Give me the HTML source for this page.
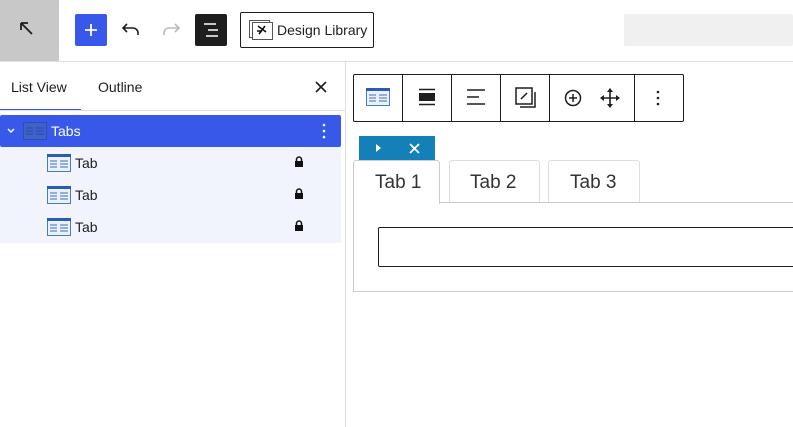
<!DOCTYPE html>
<html><head><style>
*{box-sizing:border-box;margin:0;padding:0}
body{width:793px;height:427px;overflow:hidden;background:#fff;font-family:"Liberation Sans",sans-serif;position:relative;color:#1e1e1e}
.a{position:absolute}
.tbi{position:absolute;top:0;height:47px;display:flex;align-items:center;justify-content:center}
</style></head><body>
<div class="a" style="left:0;top:0;width:59px;height:61px;background:#c8c8c8"></div>
<svg class="a" style="left:18px;top:20px" width="18" height="18" viewBox="0 0 18 18"><path d="M3 3L14 14M3 3h7M3 3v7" stroke="#1e1e1e" stroke-width="1.8" fill="none"/></svg>
<div class="a" style="left:75px;top:14px;width:32px;height:32px;background:#3858e9;border-radius:2px"></div>
<svg class="a" style="left:83px;top:22px" width="16" height="16"><path d="M8 2v12M2 8h12" stroke="#fff" stroke-width="1.8"/></svg>
<svg class="a" style="left:120px;top:20px" width="22" height="20" viewBox="0 0 22 20"><path d="M7 4L3 8l4 4M3 8h10a5 5 0 0 1 5 5v2" stroke="#1e1e1e" stroke-width="1.6" fill="none"/></svg>
<svg class="a" style="left:160px;top:20px" width="22" height="20" viewBox="0 0 22 20"><path d="M15 4l4 4-4 4M19 8H9a5 5 0 0 0-5 5v2" stroke="#bbb" stroke-width="1.6" fill="none"/></svg>
<div class="a" style="left:195px;top:14px;width:32px;height:32px;background:#1e1e1e;border-radius:2px"></div>
<svg class="a" style="left:201px;top:22px" width="20" height="16"><path d="M3 2h12M7 8h10M5 14h12" stroke="#fff" stroke-width="1.6"/></svg>
<div class="a" style="left:240px;top:12px;width:134px;height:36px;border:1px solid #1e1e1e;border-radius:2px"></div>
<svg class="a" style="left:248px;top:19px" width="26" height="22"><rect x="1.5" y="1.5" width="20" height="17" fill="#fff" stroke="#555"/><rect x="4.5" y="3.5" width="20" height="17" fill="#fff" stroke="#555"/><path d="M10 7l8 6M17 7l-6 8M9 12h5" stroke="#111" stroke-width="1.6"/></svg>
<div class="a" style="left:277px;top:22px;font-size:14px">Design Library</div>
<div class="a" style="left:624px;top:14px;width:169px;height:32px;background:#f0f0f0;border-radius:2px"></div>
<div class="a" style="left:0;top:61px;width:793px;height:1px;background:#e0e0e0"></div>
<div class="a" style="left:345px;top:62px;width:1px;height:365px;background:#e0e0e0"></div>
<div class="a" style="left:11px;top:79px;font-size:14px">List View</div>
<div class="a" style="left:98px;top:79px;font-size:14px">Outline</div>
<svg class="a" style="left:314px;top:80px" width="14" height="14"><path d="M2 2l10 10M12 2L2 12" stroke="#1e1e1e" stroke-width="1.6"/></svg>
<div class="a" style="left:0;top:109px;width:81px;height:2px;background:#3858e9"></div>
<div class="a" style="left:0;top:110px;width:345px;height:1px;background:#e0e0e0"></div>
<div class="a" style="left:0;top:115px;width:341px;height:32px;background:#3858e9;border-radius:2px"></div>
<svg class="a" style="left:6px;top:127px" width="10" height="8"><path d="M2 2l3 3 3-3" stroke="#fff" stroke-width="1.5" fill="none"/></svg>
<svg class="a" style="left:23px;top:122px" width="24" height="18"><rect x="0.5" y="0.5" width="23" height="17" fill="#3f62c8" stroke="#2e4fb0"/><path d="M3 6h7M3 9h7M3 12h7M13 6h8M13 9h8M13 12h8" stroke="#2a4aa8"/></svg>
<div class="a" style="left:51px;top:123px;font-size:14px;color:#fff">Tabs</div>
<svg class="a" style="left:321px;top:123px" width="6" height="16"><circle cx="3" cy="2" r="1.3" fill="#fff"/><circle cx="3" cy="8" r="1.3" fill="#fff"/><circle cx="3" cy="14" r="1.3" fill="#fff"/></svg>
<div class="a" style="left:0;top:147px;width:341px;height:96px;background:#f1f4fd"></div>
<div id="rows"></div>
<script></script>
<!-- rows -->
<svg class="a" style="left:47px;top:154px" width="24" height="18"><rect x="0.5" y="0.5" width="23" height="17" fill="#eaf1fb" stroke="#4a7cc4"/><rect x="0" y="0" width="24" height="3" fill="#2b5cb0"/><path d="M3 7h7M3 10h7M3 13h7M13 7h8M13 10h8M13 13h8" stroke="#3c6dbb"/></svg>
<div class="a" style="left:75px;top:155px;font-size:14px">Tab</div>
<svg class="a" style="left:294px;top:156px" width="10" height="12"><path d="M2.5 5V3.5a2.5 2.5 0 0 1 5 0V5" stroke="#111" stroke-width="1.5" fill="none"/><rect x="1" y="5" width="8" height="6" fill="#111"/></svg>
<svg class="a" style="left:47px;top:186px" width="24" height="18"><rect x="0.5" y="0.5" width="23" height="17" fill="#eaf1fb" stroke="#4a7cc4"/><rect x="0" y="0" width="24" height="3" fill="#2b5cb0"/><path d="M3 7h7M3 10h7M3 13h7M13 7h8M13 10h8M13 13h8" stroke="#3c6dbb"/></svg>
<div class="a" style="left:75px;top:187px;font-size:14px">Tab</div>
<svg class="a" style="left:294px;top:188px" width="10" height="12"><path d="M2.5 5V3.5a2.5 2.5 0 0 1 5 0V5" stroke="#111" stroke-width="1.5" fill="none"/><rect x="1" y="5" width="8" height="6" fill="#111"/></svg>
<svg class="a" style="left:47px;top:218px" width="24" height="18"><rect x="0.5" y="0.5" width="23" height="17" fill="#eaf1fb" stroke="#4a7cc4"/><rect x="0" y="0" width="24" height="3" fill="#2b5cb0"/><path d="M3 7h7M3 10h7M3 13h7M13 7h8M13 10h8M13 13h8" stroke="#3c6dbb"/></svg>
<div class="a" style="left:75px;top:219px;font-size:14px">Tab</div>
<svg class="a" style="left:294px;top:220px" width="10" height="12"><path d="M2.5 5V3.5a2.5 2.5 0 0 1 5 0V5" stroke="#111" stroke-width="1.5" fill="none"/><rect x="1" y="5" width="8" height="6" fill="#111"/></svg>

<!-- block toolbar -->
<div class="a" style="left:353px;top:74px;width:331px;height:48px;border:1px solid #1e1e1e;border-radius:2px"></div>
<div class="a" style="left:402px;top:75px;width:1px;height:46px;background:#1e1e1e"></div>
<div class="a" style="left:451px;top:75px;width:1px;height:46px;background:#1e1e1e"></div>
<div class="a" style="left:500px;top:75px;width:1px;height:46px;background:#1e1e1e"></div>
<div class="a" style="left:549px;top:75px;width:1px;height:46px;background:#1e1e1e"></div>
<div class="a" style="left:634px;top:75px;width:1px;height:46px;background:#1e1e1e"></div>
<svg class="a" style="left:366px;top:88px" width="24" height="18"><rect x="0.5" y="0.5" width="23" height="17" fill="#eaf1fb" stroke="#4a7cc4"/><rect x="0" y="0" width="24" height="3" fill="#2b5cb0"/><path d="M3 7h7M3 10h7M3 13h7M13 7h8M13 10h8M13 13h8" stroke="#3c6dbb"/></svg>
<svg class="a" style="left:418px;top:88px" width="18" height="18"><path d="M1 1.5h16M1 16.5h16" stroke="#1e1e1e" stroke-width="1.5"/><rect x="1" y="5" width="16" height="8" fill="#1e1e1e"/></svg>
<svg class="a" style="left:466px;top:89px" width="20" height="18"><path d="M1 1h18M1 8h12M1 15h18" stroke="#1e1e1e" stroke-width="1.5"/></svg>
<svg class="a" style="left:515px;top:87px" width="22" height="22"><rect x="1" y="1" width="16" height="16" fill="none" stroke="#1e1e1e" stroke-width="1.5"/><path d="M20 5v15H5M6 12l6-6" stroke="#1e1e1e" stroke-width="1.5" fill="none"/></svg>
<svg class="a" style="left:564px;top:89px" width="18" height="18"><circle cx="9" cy="9" r="7.5" fill="none" stroke="#1e1e1e" stroke-width="1.5"/><path d="M9 5v8M5 9h8" stroke="#1e1e1e" stroke-width="1.5"/></svg>
<svg class="a" style="left:599px;top:87px" width="22" height="22"><path d="M11 2v18M2 11h18" stroke="#1e1e1e" stroke-width="1.6"/><path d="M11 1l-3 4h6zM11 21l-3-4h6zM1 11l4-3v6zM21 11l-4-3v6z" fill="#1e1e1e"/></svg>
<svg class="a" style="left:655px;top:90px" width="6" height="16"><circle cx="3" cy="2" r="1.3" fill="#1e1e1e"/><circle cx="3" cy="8" r="1.3" fill="#1e1e1e"/><circle cx="3" cy="14" r="1.3" fill="#1e1e1e"/></svg>

<!-- blue strip -->
<div class="a" style="left:359px;top:136px;width:76px;height:24px;background:#1480b8"></div>
<svg class="a" style="left:375px;top:143px" width="8" height="10"><path d="M1 1l5 4-5 4z" fill="#fff"/></svg>
<svg class="a" style="left:409px;top:143px" width="11" height="11"><path d="M1 1l9 9M10 1l-9 9" stroke="#fff" stroke-width="1.8"/></svg>

<!-- tabs container -->
<div class="a" style="left:353px;top:202px;width:450px;height:90px;border:1px solid #ccc;border-top:none"></div>
<div class="a" style="left:440px;top:202px;width:353px;height:1px;background:#ccc"></div>
<div class="a" style="left:353px;top:160px;width:87px;height:44px;border:1px solid #ccc;border-bottom:none;background:#fff;border-radius:3px 3px 0 0"></div>
<div class="a" style="left:375px;top:172px;font-size:19px;color:#333">Tab 1</div>
<div class="a" style="left:449px;top:160px;width:91px;height:42px;border:1px solid #ddd;border-bottom:none;border-radius:3px 3px 0 0"></div>
<div class="a" style="left:470px;top:172px;font-size:19px;color:#333">Tab 2</div>
<div class="a" style="left:548px;top:160px;width:92px;height:42px;border:1px solid #ddd;border-bottom:none;border-radius:3px 3px 0 0"></div>
<div class="a" style="left:570px;top:172px;font-size:19px;color:#333">Tab 3</div>
<div class="a" style="left:378px;top:227px;width:430px;height:40px;border:1px solid #1e1e1e;border-radius:2px"></div>
</body></html>
